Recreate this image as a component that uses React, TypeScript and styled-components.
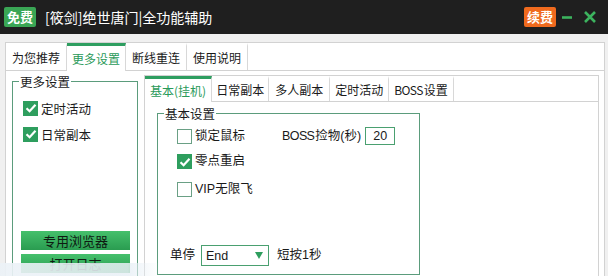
import React from "react";
import styled, { createGlobalStyle } from "styled-components";

const Global = createGlobalStyle`
  html, body { margin: 0; padding: 0; }
  body {
    width: 608px; height: 276px; overflow: hidden;
    background: #f0f0f0;
    font-family: "Liberation Sans", "Noto Sans CJK SC", sans-serif;
    font-size: 12px; color: #1a1a1a;
  }
`;

const Window = styled.div`
  position: relative;
  width: 608px; height: 276px; overflow: hidden;
  display: flex; flex-direction: column;
`;

const TitleBar = styled.div`
  height: 34px; flex: none;
  background: #1f1f1f;
  display: flex; align-items: center;
  padding: 0 12px 0 4px;
`;

const Badge = styled.span<{ $bg: string }>`
  background: ${(p) => p.$bg};
  color: #fff; font-size: 13px; font-weight: bold;
  height: 20px; line-height: 20px; padding: 0 3px;
  border-radius: 2px;
  font-family: "Noto Sans CJK SC", sans-serif;
`;

const Title = styled.span`
  color: #fff; font-size: 14px; margin-left: 9px;
  font-family: "Noto Sans CJK SC", sans-serif;
`;

const Spacer = styled.div` flex: 1; `;

const IconBtn = styled.span<{ $ml: number }>`
  display: flex; align-items: center; justify-content: center;
  margin-left: ${(p) => p.$ml}px;
`;

const Strip = styled.div` height: 8px; flex: none; `;

const TabsBox = styled.div`
  margin-left: 5px; width: 600px; flex: 1;
  box-sizing: border-box;
  border: 1px solid #d2d2d2; border-bottom: none;
  background: #fff;
  display: flex; flex-direction: column;
`;

const TabBar = styled.div<{ $h: number }>`
  display: flex; flex: none;
  height: ${(p) => p.$h}px; box-sizing: border-box;
  border-bottom: 1px solid #d2d2d2;
`;

const Tab = styled.div<{ $active?: boolean; $pad: number }>`
  display: flex; align-items: center;
  padding: 0 ${(p) => p.$pad}px;
  border-right: 1px solid #d8d8d8;
  box-sizing: border-box;
  font-family: "Noto Sans CJK SC", sans-serif;
  font-size: 12px;
  color: ${(p) => (p.$active ? "#2a9a5a" : "#1a1a1a")};
  border-top: 3px solid ${(p) => (p.$active ? "#2e9e60" : "transparent")};
  background: #fff;
  margin-bottom: ${(p) => (p.$active ? "-1px" : "0")};
  padding-bottom: 1px;
`;

const Latin = styled.span`
  letter-spacing: -0.6px;
  margin-right: 1px;
`;

const Content = styled.div`
  display: flex; flex: 1;
  padding: 2px 5px 0 6px;
`;

const Group = styled.fieldset<{ $w: number; $h: number }>`
  margin: 0; box-sizing: border-box;
  width: ${(p) => p.$w}px; height: ${(p) => p.$h}px;
  border: 1px solid #5b9c7c;
  padding: 0;
  min-width: 0;
`;

const Legend = styled.legend`
  padding: 0 1px; margin-left: 6px;
  font-family: "Noto Sans CJK SC", sans-serif;
  font-size: 12.5px; line-height: 17px;
`;

const LeftInner = styled.div`
  display: flex; flex-direction: column;
  padding: 10px 0 0 10px;
`;

const CheckRow = styled.label<{ $mt: number }>`
  display: flex; align-items: center;
  margin-top: ${(p) => p.$mt}px;
  height: 16px;
  font-family: "Noto Sans CJK SC", sans-serif;
  font-size: 12.5px;
`;

const Box = styled.span<{ $on?: boolean }>`
  width: 15px; height: 15px; box-sizing: border-box; flex: none;
  border: 1px solid ${(p) => (p.$on ? "#2e9e5e" : "#6aa085")};
  background: ${(p) => (p.$on ? "#2e9e5e" : "#fff")};
  display: flex; align-items: center; justify-content: center;
  margin-right: 3px;
`;

const Buttons = styled.div`
  margin-top: 89px;
  display: flex; flex-direction: column; gap: 4px;
  margin-left: -2px;
`;

const GreenButton = styled.div`
  width: 109px; height: 19px;
  background: linear-gradient(#45c06c, #2a9c50);
  display: flex; align-items: center; justify-content: center;
  font-family: "Noto Sans CJK SC", sans-serif;
  font-size: 13px; color: #0e1a12;
`;

const SubPanel = styled.div`
  margin-left: 6px; margin-top: 2px;
  flex: 1; box-sizing: border-box;
  border: 1px solid #d2d2d2; border-bottom: none;
  display: flex; flex-direction: column;
`;

const SubContent = styled.div`
  padding: 3px 0 0 12px;
`;

const RightInner = styled.div`
  display: flex; flex-direction: column;
  height: 153px; box-sizing: border-box;
  padding: 5px 0 9px 19px;
`;

const Row = styled.div<{ $mt?: number; $h: number }>`
  display: flex; align-items: center;
  height: ${(p) => p.$h}px;
  margin-top: ${(p) => p.$mt ?? 0}px;
`;

const Label = styled.span<{ $ml?: number }>`
  margin-left: ${(p) => p.$ml ?? 0}px;
  font-family: "Liberation Sans", "Noto Sans CJK SC", sans-serif;
  font-size: 12.5px; line-height: 15px;
`;

const NumInput = styled.div`
  width: 30px; height: 18px; box-sizing: border-box;
  border: 1px solid #4aa070;
  margin-left: 4px;
  display: flex; align-items: center; justify-content: center;
  font-size: 12.5px;
`;

const BottomRow = styled.div`
  margin-top: auto; margin-left: -7px;
  display: flex; align-items: center;
`;

const Select = styled.div`
  width: 68px; height: 21px; box-sizing: border-box;
  border: 1px solid #4aa070;
  margin: 0 8px 0 6px; padding: 0 5px 0 4px;
  display: flex; align-items: center; justify-content: space-between;
  font-size: 12.5px;
`;

const Overlay = styled.div`
  position: absolute; left: 0; bottom: 0;
  width: 160px; height: 13px;
  background: linear-gradient(90deg, rgba(236,242,247,0.92), rgba(232,240,246,0.85) 80%, rgba(240,244,248,0));
`;

const Check = () => (
  <svg width="12" height="12" viewBox="0 0 12 12">
    <path d="M1.5 6.2 L4.6 9.2 L10.5 2.8" fill="none" stroke="#fff" strokeWidth="2.2" />
  </svg>
);

export default function App() {
  return (
    <>
      <Global />
      <Window>
        <TitleBar>
          <Badge $bg="#3aa655">免费</Badge>
          <Title>[筱剑]绝世唐门|全功能辅助</Title>
          <Spacer />
          <Badge $bg="#ef6a1e">续费</Badge>
          <IconBtn $ml={6}>
            <svg width="10" height="10" viewBox="0 0 10 10">
              <path d="M0 5.5 H10" stroke="#3cb35e" strokeWidth="2.6" />
            </svg>
          </IconBtn>
          <IconBtn $ml={12}>
            <svg width="12" height="12" viewBox="0 0 12 12">
              <path d="M1 1 L11 11 M11 1 L1 11" stroke="#3cb35e" strokeWidth="2.6" />
            </svg>
          </IconBtn>
        </TitleBar>
        <Strip />
        <TabsBox>
          <TabBar $h={28}>
            <Tab $pad={6}>为您推荐</Tab>
            <Tab $pad={5} $active>更多设置</Tab>
            <Tab $pad={6}>断线重连</Tab>
            <Tab $pad={6}>使用说明</Tab>
          </TabBar>
          <Content>
            <Group $w={126} $h={230}>
              <Legend>更多设置</Legend>
              <LeftInner>
                <CheckRow $mt={0}>
                  <Box $on><Check /></Box>定时活动
                </CheckRow>
                <CheckRow $mt={10}>
                  <Box $on><Check /></Box>日常副本
                </CheckRow>
                <Buttons>
                  <GreenButton>专用浏览器</GreenButton>
                  <GreenButton>打开日志</GreenButton>
                </Buttons>
              </LeftInner>
            </Group>
            <SubPanel>
              <TabBar $h={26}>
                <Tab $pad={5} $active>基本(挂机)</Tab>
                <Tab $pad={4}>日常副本</Tab>
                <Tab $pad={6}>多人副本</Tab>
                <Tab $pad={5}>定时活动</Tab>
                <Tab $pad={5}><Latin>BOSS</Latin>设置</Tab>
              </TabBar>
              <SubContent>
                <Group $w={263} $h={170}>
                  <Legend>基本设置</Legend>
                  <RightInner>
                    <Row $h={18}>
                      <Box />
                      <Label>锁定鼠标</Label>
                      <Label $ml={37}><Latin>BOSS</Latin>捡物(秒)</Label>
                      <NumInput>20</NumInput>
                    </Row>
                    <Row $h={15} $mt={9}>
                      <Box $on><Check /></Box>
                      <Label>零点重启</Label>
                    </Row>
                    <Row $h={15} $mt={13}>
                      <Box />
                      <Label>VIP无限飞</Label>
                    </Row>
                    <BottomRow>
                      <Label>单停</Label>
                      <Select>
                        <span>End</span>
                        <svg width="8" height="7" viewBox="0 0 8 7">
                          <path d="M0 0 H8 L4 7 Z" fill="#2e9e5e" />
                        </svg>
                      </Select>
                      <Label>短按1秒</Label>
                    </BottomRow>
                  </RightInner>
                </Group>
              </SubContent>
            </SubPanel>
          </Content>
        </TabsBox>
        <Overlay />
      </Window>
    </>
  );
}
